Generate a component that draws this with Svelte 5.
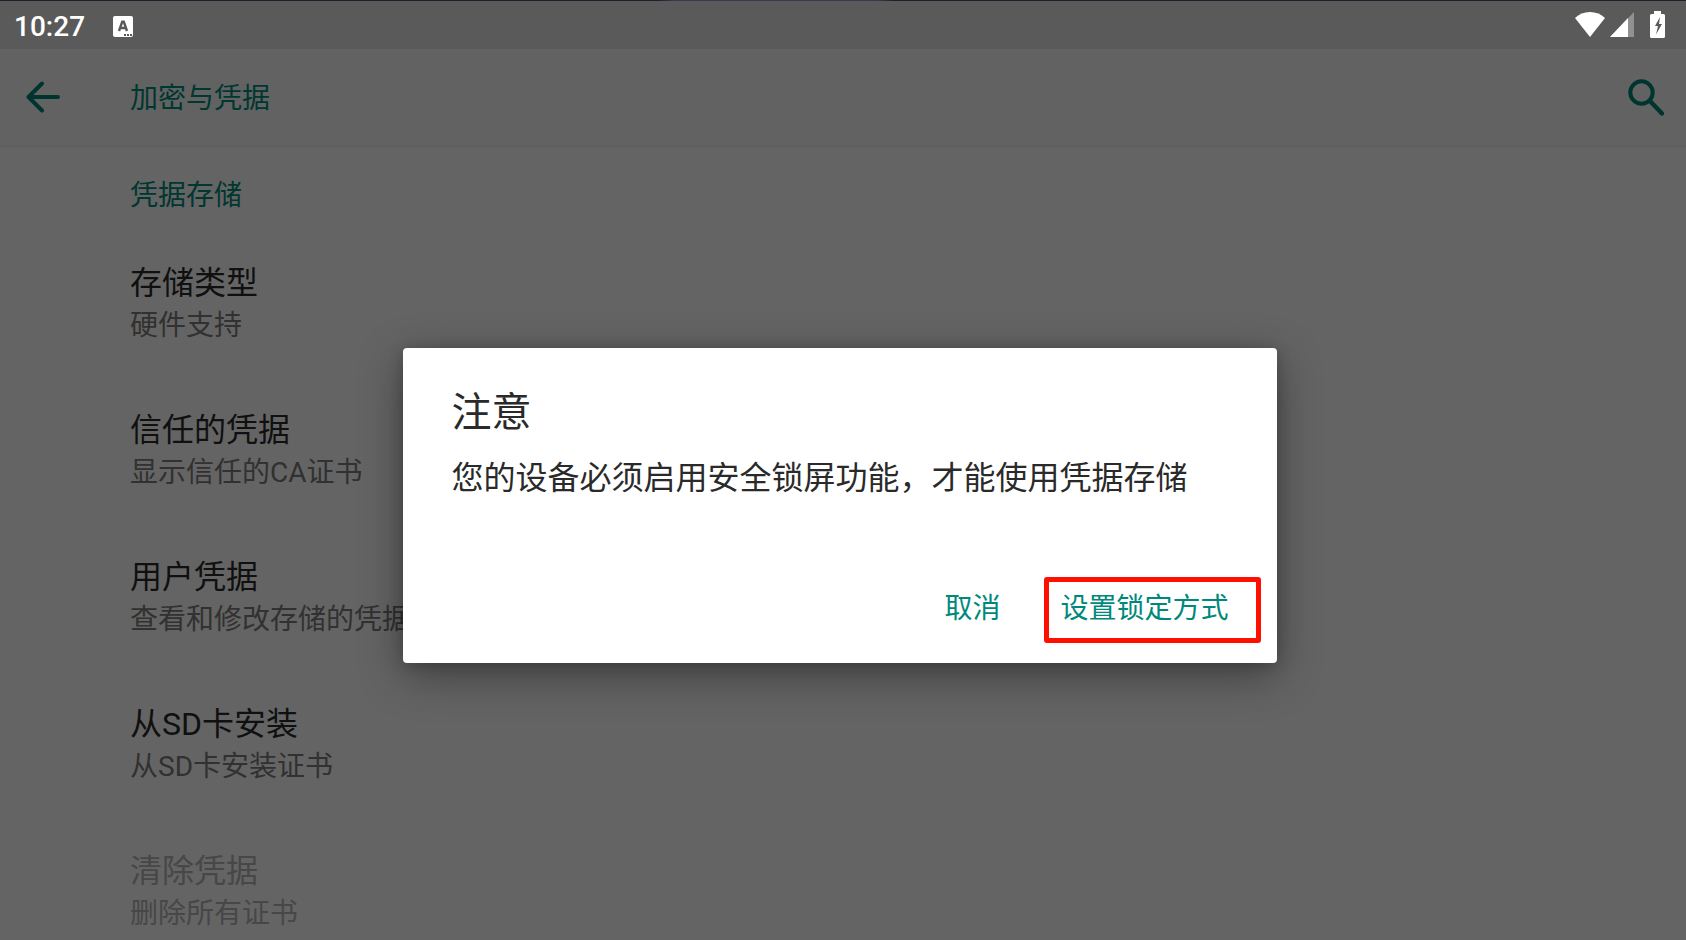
<script>
  const items = [
    { title: '存储类型', summary: '硬件支持' },
    { title: '信任的凭据', summary: '显示信任的CA证书' },
    { title: '用户凭据', summary: '查看和修改存储的凭据' },
    { title: '从SD卡安装', summary: '从SD卡安装证书' },
    { title: '清除凭据', summary: '删除所有证书', disabled: true }
  ];
</script>

<div class="screen">
  <header class="status">
    <time>10:27</time>
    <svg class="ime" viewBox="0 0 20 21" aria-hidden="true">
      <rect width="20" height="21" rx="2" fill="#fff" />
      <path d="M6 15 9.200 5.800h1.600L14 15M7.200 12h5.600" fill="none" stroke="#5a5a5a" stroke-width="2.400" />
      <path d="M11 18h2v2h-2zM14 18h2v2h-2zM17 18h2v2h-2z" fill="#5a5a5a" />
    </svg>
    <div class="indicators">
      <svg width="30" height="25" viewBox="0 0 30 25" aria-hidden="true">
        <path d="M15 25 0 6Q6 0 15 0T30 6Z" fill="#fff" />
      </svg>
      <svg width="24" height="25" viewBox="0 0 24 25" aria-hidden="true">
        <path d="M24 0v25H0z" fill="#919191" />
        <path d="M18 6v19H0z" fill="#fff" />
      </svg>
      <svg class="battery" width="15" height="27" viewBox="0 0 15 27" aria-hidden="true">
        <path d="M4 0h7v3h2.500q1.500 0 1.500 1.500v21q0 1.500-1.500 1.500h-12Q0 27 0 25.500v-21Q0 3 1.500 3H4z" fill="#fff" />
        <path d="M10 6 5 15h3l-2 8.500L12 13H9z" fill="#5a5a5a" />
      </svg>
    </div>
  </header>

  <div class="appbar">
    <button class="icon" aria-label="返回">
      <svg width="34" height="32" viewBox="0 0 34 32">
        <path d="M32 16H3M16 2.500 2.500 16 16 29.500" fill="none" stroke="currentColor" stroke-width="4" stroke-linecap="round" stroke-linejoin="round" />
      </svg>
    </button>
    <h1>加密与凭据</h1>
    <button class="icon" aria-label="搜索">
      <svg width="36" height="37" viewBox="0 0 36 37">
        <circle cx="13.500" cy="13.500" r="11.200" fill="none" stroke="currentColor" stroke-width="4" />
        <path d="m22 22 12 12.500" stroke="currentColor" stroke-width="4.500" stroke-linecap="round" />
      </svg>
    </button>
  </div>

  <main>
    <h2>凭据存储</h2>
    <ul>
      {#each items as item}
        <li class:disabled={item.disabled}>
          <div class="title">{item.title}</div>
          <div class="summary">{item.summary}</div>
        </li>
      {/each}
    </ul>
  </main>

  <div class="scrim">
    <div class="dialog" role="alertdialog" aria-labelledby="notice-title" aria-describedby="notice-text">
      <h3 id="notice-title">注意</h3>
      <p id="notice-text">您的设备必须启用安全锁屏功能，才能使用凭据存储</p>
      <div class="actions">
        <button>取消</button>
        <button class="marked">设置锁定方式</button>
      </div>
    </div>
  </div>
</div>

<style>
  :global(body) {
    margin: 0;
  }
  .screen {
    position: relative;
    display: flex;
    flex-direction: column;
    height: 100vh;
    overflow: hidden;
    background: #fafafa;
    color: #2a2a2a;
    font-family: Roboto, 'Noto Sans CJK SC', sans-serif;
  }
  h1, h2, h3, p, ul {
    margin: 0;
    padding: 0;
    font-weight: 400;
  }
  svg {
    display: block;
  }
  button {
    border: 0;
    padding: 0;
    background: none;
    color: #008577;
    font: inherit;
  }
  .status {
    position: relative;
    z-index: 2;
    box-sizing: border-box;
    display: flex;
    flex: none;
    align-items: center;
    height: 49px;
    padding: 3px 21px 0 14px;
    background:
      linear-gradient(90deg, #211e2c 39%, #3c394a 40% 52%, #211e2c 53%) top / 100% 1px no-repeat,
      #5a5a5a;
    color: #fff;
  }
  time {
    padding-top: 1px;
    font-size: 28px;
    font-weight: 500;
    line-height: 32px;
  }
  .ime {
    width: 20px;
    height: 21px;
    margin-left: 28px;
  }
  .indicators {
    display: flex;
    align-items: center;
    gap: 5px;
    margin-left: auto;
    padding-bottom: 3px;
  }
  .battery {
    margin-left: 11px;
  }
  .appbar {
    display: flex;
    flex: none;
    align-items: center;
    height: 96px;
    padding: 0 22px 0 26px;
    background: #f5f5f5;
    border-bottom: 1px solid #e9e9e9;
    box-shadow: 0 1px 2px rgba(0, 0, 0, 0.08);
  }
  h1 {
    flex: 1;
    margin-left: 70px;
    padding-top: 4px;
    color: #00897b;
    font-size: 28px;
    line-height: 40px;
  }
  main {
    flex: 1;
    min-height: 0;
    padding: 30px 130px 0;
    overflow: hidden;
  }
  h2 {
    color: #00897b;
    font-size: 28px;
    line-height: 40px;
  }
  ul {
    padding-top: 13px;
    list-style: none;
  }
  li {
    padding: 31px 0;
  }
  .title {
    font-size: 32px;
    line-height: 46px;
  }
  .summary {
    color: #7a7a7a;
    font-size: 28px;
    line-height: 39px;
  }
  .disabled .title,
  .disabled .summary {
    color: #b2b2b2;
  }
  .scrim {
    position: absolute;
    inset: 0;
    z-index: 1;
    display: grid;
    place-items: center;
    padding: 70px 7px 0 0;
    background: rgba(0, 0, 0, 0.6);
  }
  .dialog {
    box-sizing: border-box;
    width: 100%;
    max-width: 874px;
    padding: 39px 26px 21px 49px;
    border-radius: 4px;
    background: #fff;
    box-shadow: 0 12px 44px rgba(0, 0, 0, 0.38), 0 2px 14px rgba(0, 0, 0, 0.18);
  }
  h3 {
    font-size: 40px;
    line-height: 52px;
  }
  p {
    padding-top: 16px;
    font-size: 32px;
    line-height: 46px;
  }
  .actions {
    display: flex;
    justify-content: flex-end;
    gap: 16px;
    padding-top: 74px;
  }
  .actions button {
    position: relative;
    padding: 0 22px;
    color: #00897b;
    font-size: 28px;
    line-height: 67px;
  }
  .marked::after {
    content: '';
    position: absolute;
    inset: 2px -10px -1px 6px;
    border: 5px solid #ff0f00;
    border-radius: 3px;
  }
</style>
